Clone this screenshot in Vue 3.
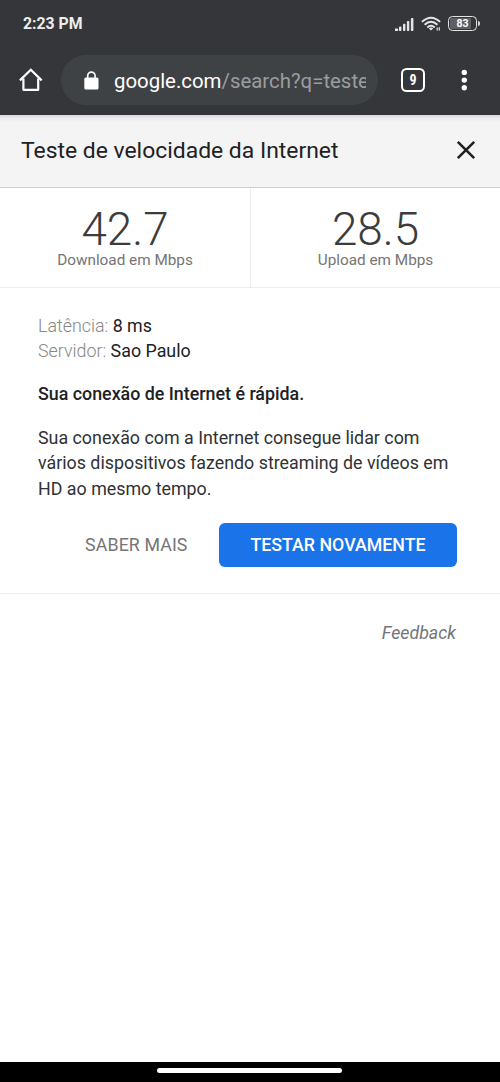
<script setup>
const metrics = [
  { value: '42.7', label: 'Download em Mbps' },
  { value: '28.5', label: 'Upload em Mbps' },
]
const details = [
  { name: 'Latência:', value: '8 ms' },
  { name: 'Servidor:', value: 'Sao Paulo' },
]
</script>

<template>
  <div class="phone">
    <div class="chrome">
      <div class="status">
        <span class="time">2:23 PM</span>
        <svg class="signal" width="20" height="15" viewBox="0 0 20 15" fill="#e4e5e6">
          <rect x="-0.3" y="11.4" width="3.4" height="2.6" rx="0.8" />
          <rect x="4" y="9.5" width="2.4" height="4.5" rx="0.8" />
          <rect x="8" y="6.8" width="2.4" height="7.2" rx="0.8" />
          <rect x="11.9" y="4" width="2.4" height="10" rx="0.8" />
          <rect x="15.9" y="1" width="2.5" height="13" rx="0.8" />
        </svg>
        <svg class="wifi" width="21" height="16" viewBox="0 0 21 16" fill="none" stroke="#e4e5e6" stroke-width="1.9">
          <path d="M0.9 5.9 Q10 -2.6 19.1 5.9" />
          <path d="M3.6 8.8 Q10 2.7 16.4 8.8" />
          <path d="M6.3 11.5 Q10 8 13.7 11.5" />
          <path d="M7.8 12.4 Q10 10.8 12.2 12.4 L10 14.6 Z" fill="#e4e5e6" stroke="none" />
          <path d="M16.2 11.4 V14.4 M18.3 11.2 V14.6" stroke-width="1.2" />
        </svg>
        <div class="battery">
          <span class="cell"><span class="charge">83</span></span>
          <span class="tip"></span>
        </div>
      </div>
      <div class="toolbar">
        <svg class="home" width="24" height="24" viewBox="0 0 24 24" fill="none" stroke="#fff" stroke-width="2.2" stroke-linejoin="round">
          <path d="M0.9 12.4 L11.8 1.8 L22.7 12.4" stroke-linejoin="miter" />
          <path d="M4.4 10.5 V21.8 H19.2 V10.5" />
        </svg>
        <div class="address">
          <svg class="lock" width="15" height="19" viewBox="0 0 15 19">
            <rect x="0.3" y="6.6" width="14.2" height="12" rx="1.5" fill="#fff" />
            <path d="M3.7 7.2 V4.8 A3.7 3.7 0 0 1 11.1 4.8 V7.2" fill="none" stroke="#fff" stroke-width="1.6" />
          </svg>
          <span class="url">google.com<span class="path">/search?q=teste</span></span>
        </div>
        <span class="tabs">9</span>
        <svg class="more" width="8" height="22" viewBox="0 0 8 22" fill="#fff">
          <circle cx="4.3" cy="3.4" r="2.7" />
          <circle cx="4.3" cy="11.1" r="2.7" />
          <circle cx="4.3" cy="18.8" r="2.7" />
        </svg>
      </div>
    </div>

    <header class="heading">
      <h1>Teste de velocidade da Internet</h1>
      <svg width="20" height="20" viewBox="0 0 20 20" fill="none" stroke="#202124" stroke-width="2.6">
        <path d="M1.8 1.8 L18.2 18.2 M18.2 1.8 L1.8 18.2" />
      </svg>
    </header>

    <section class="metrics">
      <div v-for="m in metrics" :key="m.label" class="metric">
        <span class="value">{{ m.value }}</span>
        <span class="label">{{ m.label }}</span>
      </div>
    </section>

    <main class="result">
      <p v-for="d in details" :key="d.name" class="detail">
        <span class="name">{{ d.name }}</span> {{ d.value }}
      </p>
      <p class="summary">Sua conexão de Internet é rápida.</p>
      <p class="explain">Sua conexão com a Internet consegue lidar com<br>vários dispositivos fazendo streaming de vídeos em<br>HD ao mesmo tempo.</p>
      <div class="actions">
        <button class="learn">SABER MAIS</button>
        <button class="retry">TESTAR NOVAMENTE</button>
      </div>
    </main>
    <footer class="feedback">Feedback</footer>
    <div class="navbar"><span class="handle"></span></div>
  </div>
</template>

<style>
body { margin: 0; background: #fff; }
</style>

<style scoped>
.phone {
  width: 500px;
  height: 1082px;
  display: flex;
  flex-direction: column;
  overflow: hidden;
  background: #fff;
  color: #202124;
  font-family: Roboto, "Liberation Sans", sans-serif;
}
.chrome { height: 115px; flex: none; background: #35363a; }
.status {
  height: 48px;
  box-sizing: border-box;
  padding: 0 20px 0 23px;
  display: flex;
  align-items: center;
}
.time { flex: 1; color: #eceded; font-size: 15.8px; font-weight: 700; line-height: 18px; }
.signal { margin-right: 6px; }
.wifi { margin-right: 6px; }
.battery { display: flex; align-items: center; margin-top: -1px; }
.cell {
  box-sizing: border-box;
  width: 29px;
  height: 15px;
  padding: 1px;
  border: 1.5px solid #e4e5e6;
  border-radius: 4.5px;
}
.charge {
  display: block;
  height: 11px;
  border-radius: 2px;
  background: linear-gradient(90deg, #5e5f62 83%, transparent 83%);
  color: #fff;
  font-size: 10.5px;
  font-weight: 700;
  line-height: 12px;
  text-align: center;
}
.tip { width: 2px; height: 5px; margin-left: 1px; border-radius: 0 2px 2px 0; background: #d8d9da; }
.toolbar { height: 64px; display: flex; align-items: center; padding-left: 19px; }
.address {
  width: 317px;
  height: 50px;
  box-sizing: border-box;
  margin-left: 18px;
  padding: 0 12px 0 23px;
  display: flex;
  align-items: center;
  border-radius: 25px;
  background: #3f4245;
}
.lock { flex: none; margin-right: 15px; }
.url {
  flex: 1;
  min-width: 0;
  margin-top: 2px;
  overflow: hidden;
  white-space: nowrap;
  color: #fff;
  font-size: 20.4px;
  line-height: 28px;
}
.path { color: #9b9da0; }
.tabs {
  box-sizing: border-box;
  width: 24px;
  height: 24px;
  margin-left: 23px;
  border: 2.5px solid #fff;
  border-radius: 5.5px;
  color: #fff;
  font-family: "Roboto Condensed", Roboto, sans-serif;
  font-size: 14px;
  font-weight: 700;
  line-height: 20px;
  text-align: center;
}
.more { margin-left: 35px; }
.heading {
  height: 73px;
  flex: none;
  box-sizing: border-box;
  padding: 0 24px 2px 21px;
  display: flex;
  align-items: center;
  justify-content: space-between;
  border-bottom: 1px solid #cfcfcf;
  background: linear-gradient(#d5d6d6 0, #ececec 3px, #f4f4f4 8px);
}
h1 { margin: 2px 0 0; font-size: 22.9px; font-weight: 400; line-height: 30px; white-space: nowrap; }
.metrics {
  height: 100px;
  flex: none;
  box-sizing: border-box;
  display: grid;
  grid-template-columns: 1fr 1fr;
  border-bottom: 1px solid #ededed;
}
.metric { display: flex; flex-direction: column; align-items: center; padding-top: 21px; }
.metric + .metric { border-left: 1px solid #ededed; }
.value { color: #3c3c3c; font-size: 45.8px; font-weight: 300; line-height: 42px; }
.label { color: #757575; font-size: 15.3px; line-height: 18px; white-space: nowrap; }
.result {
  height: 306px;
  flex: none;
  box-sizing: border-box;
  padding: 25px 43px 0 38px;
  border-bottom: 1px solid #ededed;
  font-size: 17.83px;
  line-height: 25.4px;
}
p { margin: 0; white-space: nowrap; }
.name { color: #878787; font-weight: 300; }
.summary { margin-top: 17.5px; font-weight: 500; }
.explain { margin-top: 18px; color: #303134; }
.actions { margin-top: 21.6px; display: flex; justify-content: flex-end; }
button {
  height: 44px;
  padding: 0;
  border: 0;
  background: none;
  font-family: inherit;
  font-size: 17.8px;
  font-weight: 500;
  line-height: 44px;
  white-space: nowrap;
}
.learn { margin-right: 31.5px; color: #757575; font-weight: 400; letter-spacing: 0.1px; }
.retry { width: 238px; border-radius: 6px; background: #1a73e8; color: #fff; }
.feedback {
  flex: 1;
  padding: 26px 44px 0;
  color: #70757a;
  font-size: 17.8px;
  font-style: italic;
  line-height: 25px;
  text-align: right;
}
.navbar {
  height: 20.5px;
  flex: none;
  box-sizing: border-box;
  padding-top: 6.5px;
  background: #000;
}
.handle { display: block; width: 185px; height: 5px; margin-left: 157px; border-radius: 2.5px; background: #fff; }
</style>
